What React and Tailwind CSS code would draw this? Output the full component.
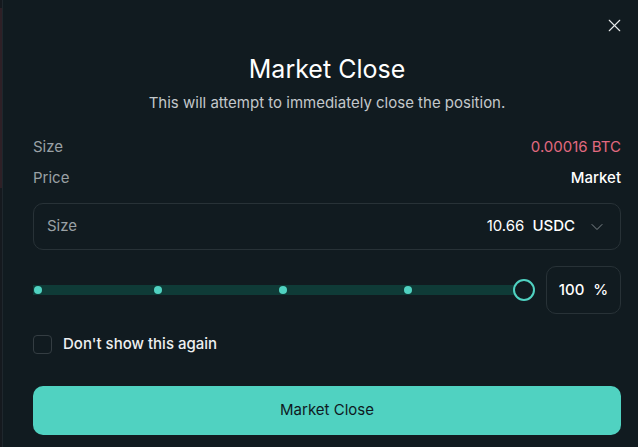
import { X, ChevronDown } from 'lucide-react'

const marks = [1, 121, 246, 371]

function Slider() {
  return (
    <div className="relative h-[22px] flex-1">
      <div className="absolute left-0 right-[21px] top-[6px] h-[10px] bg-[#0f3b37]" />
      {marks.map((x) => (
        <div
          key={x}
          className="absolute top-[7px] h-[8px] w-[8px] rounded-full bg-[#50d2c1]"
          style={{ left: x }}
        />
      ))}
      <div className="absolute right-[11px] top-0 h-[22px] w-[22px] rounded-full border-2 border-[#50d2c1] bg-[#111b20]" />
    </div>
  )
}

export default function App() {
  return (
    <div
      className="flex h-[447px] w-[638px] bg-[#111b20] text-white"
      style={{ fontFamily: 'Inter, "Noto Sans", sans-serif' }}
    >
      <div className="flex w-[3px] flex-col border-r border-[#1f272d] bg-[#15191e]">
        <div className="mt-[8px] h-[180px] bg-[#2e2026]" />
      </div>

      <div className="relative flex flex-1 flex-col pl-[30px] pr-[17px]">
        <button className="absolute right-[13px] top-[15px] text-[#e6e8e9]">
          <X size={21} strokeWidth={1.3} />
        </button>

        <h1 className="mt-[53px] text-center text-[25px] leading-[32px] font-normal">
          Market Close
        </h1>
        <p className="mt-[8px] text-center text-[15px] leading-[20px] text-[#c3c8cb]">
          This will attempt to immediately close the position.
        </p>

        <div className="mt-[24px] flex justify-between text-[15px] leading-[20px]">
          <span className="text-[#9aa1a5]">Size</span>
          <span className="text-[#e2697f]">0.00016 BTC</span>
        </div>
        <div className="mt-[11px] flex justify-between text-[15px] leading-[20px]">
          <span className="text-[#9aa1a5]">Price</span>
          <span className="font-medium text-white">Market</span>
        </div>

        <div className="mt-[15px] flex h-[47px] items-center rounded-[10px] border border-[#283237] pl-[13px] pr-[13px] text-[15px]">
          <span className="text-[#9aa1a5]">Size</span>
          <span className="ml-auto">10.66</span>
          <span className="ml-[8px] font-medium">USDC</span>
          <ChevronDown size={20} strokeWidth={1.2} className="ml-[12px] text-[#7d868b]" />
        </div>

        <div className="mt-[16px] flex items-center">
          <Slider />
          <div className="flex h-[48px] w-[75px] items-center justify-center gap-[9px] rounded-[10px] border border-[#283237] text-[15px] font-medium">
            <span>100</span>
            <span>%</span>
          </div>
        </div>

        <label className="mt-[19px] flex items-center gap-[11px]">
          <span className="h-[19px] w-[19px] rounded-[4px] border border-[#343d42]" />
          <span className="text-[15px] font-medium text-[#eef0f1]">Don't show this again</span>
        </label>

        <button className="mt-[30px] h-[49px] rounded-[10px] bg-[#50d2c1] text-[15px] text-[#0f1a1f]">
          Market Close
        </button>
      </div>
    </div>
  )
}
